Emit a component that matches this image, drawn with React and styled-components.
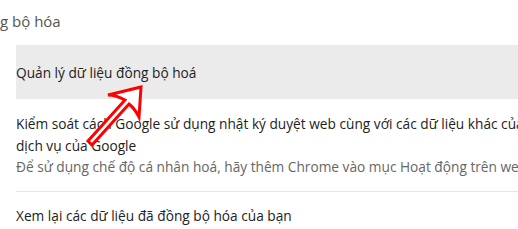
import React from 'react';
import styled, { createGlobalStyle } from 'styled-components';

const Global = createGlobalStyle`
  html, body {
    margin: 0;
    padding: 0;
    background: #ffffff;
    overflow: hidden;
  }
  body {
    font-family: 'Open Sans', 'Noto Sans', sans-serif;
  }
`;

const Page = styled.div`
  position: relative;
  width: 518px;
  height: 229px;
  overflow: hidden;
`;

const Heading = styled.div`
  height: 45px;
  display: flex;
  align-items: center;
  padding-bottom: 3px;
  box-sizing: border-box;
  font-size: 15px;
  color: #555555;
  white-space: nowrap;
`;

const List = styled.div`
  margin-left: 16px;
  display: flex;
  flex-direction: column;
`;

const Row = styled.div`
  height: ${(p) => p.h}px;
  display: flex;
  align-items: center;
  background: ${(p) => (p.active ? '#ebebeb' : 'transparent')};
  font-size: 13.7px;
  color: #222222;
  white-space: nowrap;
`;

const Block = styled.div`
  padding: 14px 0 13px;
  border-bottom: 1px solid #e6e6e6;
  display: flex;
  flex-direction: column;
  font-size: 13.7px;
  line-height: 21.5px;
  white-space: nowrap;
`;

const Main = styled.div`
  color: #222222;
`;

const Sub = styled.div`
  color: #666666;
`;

const Arrow = styled.svg`
  position: absolute;
  left: 80px;
  top: 80px;
  pointer-events: none;
`;

export default function App() {
  return (
    <>
      <Global />
      <Page>
        <Heading>g bộ hóa</Heading>
        <List>
          <Row h={54} active>Quản lý dữ liệu đồng bộ hoá</Row>
          <Block>
            <Main>Kiểm soát cách Google sử dụng nhật ký duyệt web cùng với các dữ liệu khác của</Main>
            <Main>dịch vụ của Google</Main>
            <Sub>Để sử dụng chế độ cá nhân hoá, hãy thêm Chrome vào mục Hoạt động trên web</Sub>
          </Block>
          <Row h={48}>Xem lại các dữ liệu đã đồng bộ hóa của bạn</Row>
        </List>
        <Arrow width="80" height="80" viewBox="0 0 80 80">
          <path
            d="M8 61 L45 20 Q36 15 28 15 L61 7 L59 37 Q55 29 49 24 L12 65 Z"
            fill="#ffffff"
            stroke="#ff0000"
            strokeWidth="3"
            strokeLinejoin="miter"
          />
        </Arrow>
      </Page>
    </>
  );
}
